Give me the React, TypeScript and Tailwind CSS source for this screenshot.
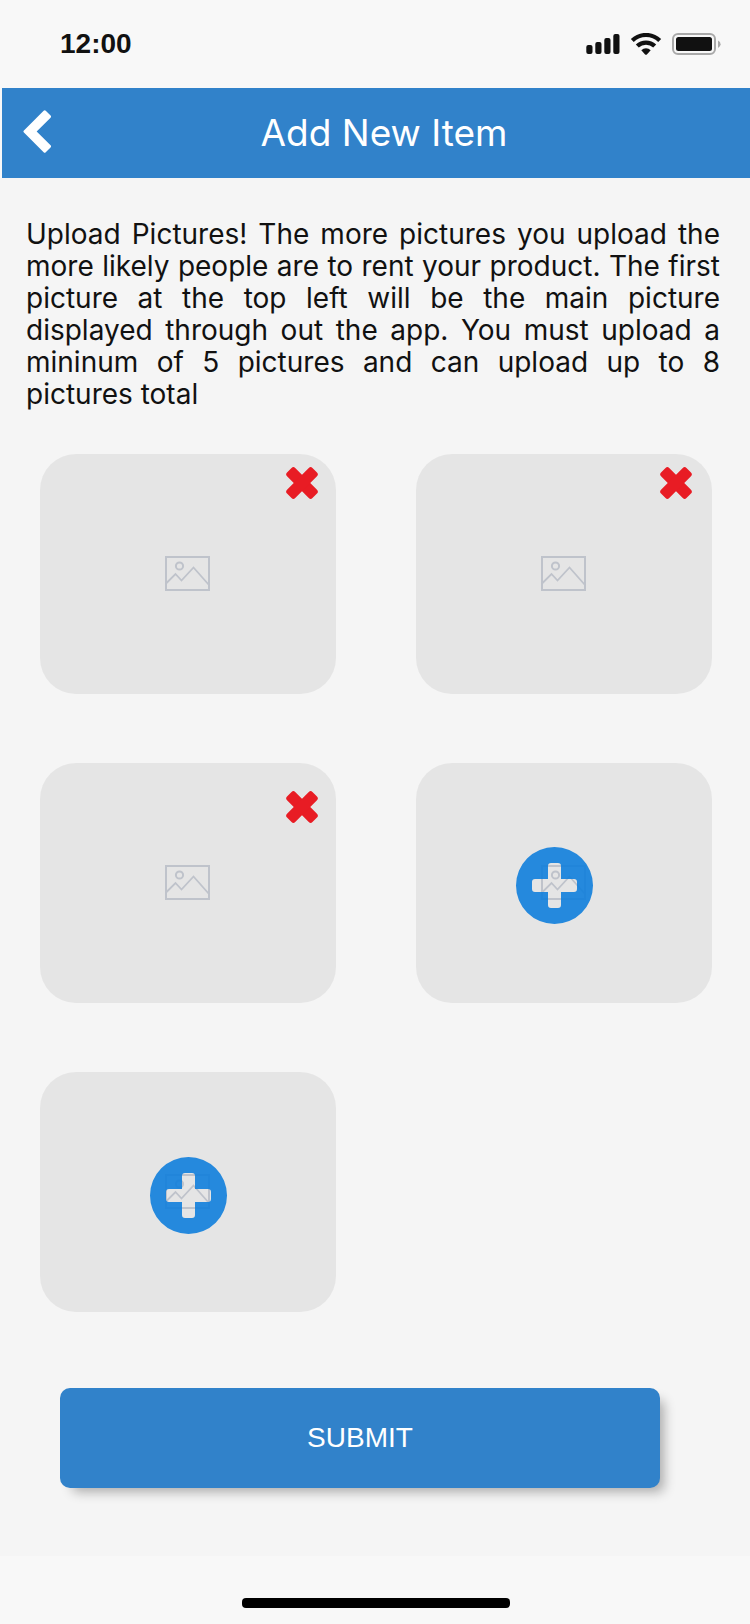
type Slot = {
  id: number;
  kind: "filled" | "empty";
  overlay: string;
};

const slots: Slot[] = [
  { id: 1, kind: "filled", overlay: "top-[13px] right-[18px]" },
  { id: 2, kind: "filled", overlay: "top-[13px] right-5" },
  { id: 3, kind: "filled", overlay: "top-7 right-[18px]" },
  { id: 4, kind: "empty", overlay: "top-[84px] right-[119px]" },
  { id: 5, kind: "empty", overlay: "top-[85px] right-[109px]" },
];

function SignalIcon() {
  return (
    <svg width="34" height="22" viewBox="0 0 34 22" fill="#111" aria-hidden="true">
      <rect x="0.3" y="12" width="6.2" height="9" rx="2" />
      <rect x="9.3" y="9" width="6.2" height="12" rx="2" />
      <rect x="18.3" y="5" width="6.2" height="16" rx="2" />
      <rect x="27.3" y="1" width="6.2" height="20" rx="2" />
    </svg>
  );
}

function WifiIcon() {
  return (
    <svg width="32" height="22" viewBox="0 0 32 22" fill="none" stroke="#111" aria-hidden="true">
      <path d="M2.3 7.6 A19.5 19.5 0 0 1 29.7 7.6" strokeWidth="4.2" />
      <path d="M7.3 13.1 A12.4 12.4 0 0 1 24.7 13.1" strokeWidth="4.2" />
      <path d="M11.3 17.2 A6.8 6.8 0 0 1 20.7 17.2 L16.9 21.4 Q16 22.2 15.1 21.4 Z" fill="#111" stroke="none" />
    </svg>
  );
}

function BatteryIcon() {
  return (
    <svg width="49" height="22" viewBox="0 0 49 22" aria-hidden="true">
      <rect x="1" y="1" width="42" height="20" rx="5" fill="none" stroke="#a9a9a9" strokeWidth="2" />
      <rect x="4" y="4" width="36" height="14" rx="2.5" fill="#111" />
      <path d="M46 7.5 Q48.6 8.6 48.6 11.2 Q48.6 13.8 46 15 Z" fill="#a9a9a9" />
    </svg>
  );
}

function BackIcon() {
  return (
    <svg width="28" height="43" viewBox="0 0 28 43" fill="#fff" stroke="#fff" strokeWidth="3" strokeLinejoin="round" aria-hidden="true">
      <path d="M2 21.5 L21.7 1.8 L26.5 6.6 L11.6 21.5 L26.5 36.4 L21.7 41.2 Z" />
    </svg>
  );
}

function RemoveIcon() {
  return (
    <svg width="32" height="32" viewBox="0 0 32 32" fill="#e81c24" aria-hidden="true">
      <rect x="-2" y="10.2" width="36" height="11.6" rx="2.6" transform="rotate(45 16 16)" />
      <rect x="-2" y="10.2" width="36" height="11.6" rx="2.6" transform="rotate(-45 16 16)" />
    </svg>
  );
}

function AddIcon() {
  return (
    <svg width="77" height="77" viewBox="0 0 77 77" fill="#0f7edb" fillOpacity="0.9" fillRule="evenodd" aria-hidden="true">
      <path d="M38.5 0 A38.5 38.5 0 1 1 38.5 77 A38.5 38.5 0 1 1 38.5 0 Z M35 16 Q32 16 32 19 V32 H19 Q16 32 16 35 V42 Q16 45 19 45 H32 V58 Q32 61 35 61 H42 Q45 61 45 58 V45 H58 Q61 45 61 42 V35 Q61 32 58 32 H45 V19 Q45 16 42 16 Z" />
    </svg>
  );
}

function PictureIcon() {
  return (
    <svg width="46" height="36" viewBox="0 0 46 36" fill="none" stroke="#bfc3cb" strokeWidth="2" aria-hidden="true">
      <rect x="1" y="1" width="43" height="33" />
      <circle cx="14.5" cy="10" r="3.6" />
      <path d="M1 27.5 L10.5 18 L16.5 24.5 L28.5 11.5 L44 29" strokeWidth="1.8" />
    </svg>
  );
}

function PictureSlot({ slot }: { slot: Slot }) {
  return (
    <li className="relative flex h-60 items-center justify-center rounded-[36px] bg-[#e5e5e5]">
      <PictureIcon />
      <button
        type="button"
        aria-label={slot.kind === "filled" ? `Remove picture ${slot.id}` : `Add picture ${slot.id}`}
        className={`absolute ${slot.overlay}`}
      >
        {slot.kind === "filled" ? <RemoveIcon /> : <AddIcon />}
      </button>
    </li>
  );
}

export default function App() {
  return (
    <div className="flex min-h-screen flex-col bg-[#f8f8f8] font-['Inter',sans-serif] text-[#111]">
      <div className="flex h-[88px] items-center justify-between pr-[29px] pl-[60px]">
        <span className="font-['Liberation_Sans',sans-serif] text-[28px] font-bold">12:00</span>
        <div className="flex items-center gap-2.5">
          <SignalIcon />
          <WifiIcon />
          <BatteryIcon />
        </div>
      </div>

      <header className="ml-0.5 grid h-[90px] grid-cols-[64px_1fr_48px] items-center bg-[#3182ca] text-white">
        <button type="button" aria-label="Back" className="pb-1 pl-[21px]">
          <BackIcon />
        </button>
        <h1 className="text-center text-[37px] font-normal">Add New Item</h1>
      </header>

      <main className="flex-1 bg-[#f5f5f5] pt-10 pb-[68px]">
        <p className="pr-[30px] pl-[26px] text-justify text-[28px] leading-8">
          Upload Pictures! The more pictures you upload the more likely people are to rent your
          product. The first picture at the top left will be the main picture displayed through out
          the app. You must upload a mininum of 5 pictures and can upload up to 8 pictures total
        </p>

        <ul className="mt-11 grid grid-cols-2 gap-x-20 gap-y-[69px] pr-[38px] pl-10">
          {slots.map((slot) => (
            <PictureSlot key={slot.id} slot={slot} />
          ))}
        </ul>

        <div className="mt-[76px] pr-[90px] pl-[60px]">
          <button
            type="submit"
            className="h-[100px] w-full rounded-[10px] bg-[#3182ca] font-['Liberation_Sans',sans-serif] text-[28px] text-white shadow-[8px_8px_12px_-4px_rgba(0,0,0,0.3)]"
          >
            SUBMIT
          </button>
        </div>
      </main>

      <footer className="ml-0.5 flex h-[68px] justify-center pt-[42px]">
        <div className="h-2.5 w-[268px] rounded bg-black" />
      </footer>
    </div>
  );
}
